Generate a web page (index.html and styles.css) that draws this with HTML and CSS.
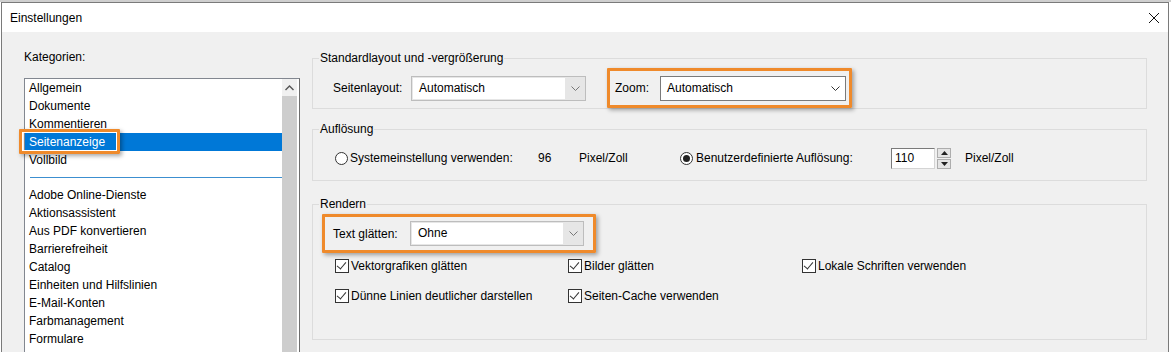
FILE: index.html
```html
<!DOCTYPE html>
<html lang="de">
<head>
  <meta charset="UTF-8" />
  <title>Einstellungen</title>
  <link rel="stylesheet" href="styles.css">
</head>
<body>

<div class="backdrop"></div>

<div class="dialog">
  <div class="titlebar">
    <span class="title">Einstellungen</span>
    <svg class="close" width="12" height="12" viewBox="0 0 12 12">
      <path d="M1 1 L11 11 M11 1 L1 11" stroke="#111" stroke-width="1" fill="none" />
    </svg>
  </div>

  <div class="dialog-body">
    <div class="categories">
      <div class="cat-label">Kategorien:</div>
      <div class="listbox">
        <ul class="list">
          <li>Allgemein</li>
          <li>Dokumente</li>
          <li>Kommentieren</li>
          <li class="selected">Seitenanzeige<span class="mark mark-item"></span></li>
          <li>Vollbild</li>
          <li class="sep"></li>
          <li>Adobe Online-Dienste</li>
          <li>Aktionsassistent</li>
          <li>Aus PDF konvertieren</li>
          <li>Barrierefreiheit</li>
          <li>Catalog</li>
          <li>Einheiten und Hilfslinien</li>
          <li>E-Mail-Konten</li>
          <li>Farbmanagement</li>
          <li>Formulare</li>
        </ul>
        <div class="scrollbar">
          <div class="scroll-up">
            <svg width="9" height="6" viewBox="0 0 9 6">
              <path d="M0.5 5 L4.5 1 L8.5 5" stroke="#555" stroke-width="1.4" fill="none" />
            </svg>
          </div>
          <div class="thumb"></div>
        </div>
      </div>
    </div>

    <div class="panel">
      <fieldset class="group g-layout">
        <legend>Standardlayout und -vergrößerung</legend>
        <div class="row-layout">
          <span class="lbl lbl-layout">Seitenlayout:</span>
          <div class="combo flat w-layout">
            <span class="combo-value">Automatisch</span>
            <span class="combo-arrow"><svg width="9" height="5" viewBox="0 0 9 5"><path d="M0.5 0.5 L4.5 4.5 L8.5 0.5" stroke="#777" fill="none" /></svg></span>
          </div>
          <div class="mark mark-zoom">
            <span class="lbl lbl-zoom">Zoom:</span>
            <div class="combo plain w-zoom">
              <span class="combo-value">Automatisch</span>
              <span class="combo-arrow"><svg width="9" height="5" viewBox="0 0 9 5"><path d="M0.5 0.5 L4.5 4.5 L8.5 0.5" stroke="#333" fill="none" /></svg></span>
            </div>
          </div>
        </div>
      </fieldset>

      <fieldset class="group g-res">
        <legend>Auflösung</legend>
        <div class="row-res">
          <span class="radio"></span>
          <span class="res-sys">Systemeinstellung verwenden:</span>
          <span class="res-num">96</span>
          <span class="res-unit">Pixel/Zoll</span>
          <span class="radio checked"></span>
          <span class="res-custom">Benutzerdefinierte Auflösung:</span>
          <span class="numbox">110</span>
          <span class="spinner">
            <span class="spin-btn"><svg width="7" height="4" viewBox="0 0 7 4"><path d="M0 4 L3.5 0 L7 4 Z" fill="#222" /></svg></span>
            <span class="spin-btn"><svg width="7" height="4" viewBox="0 0 7 4"><path d="M0 0 L3.5 4 L7 0 Z" fill="#222" /></svg></span>
          </span>
          <span class="res-unit2">Pixel/Zoll</span>
        </div>
      </fieldset>

      <fieldset class="group g-render">
        <legend>Rendern</legend>
        <div class="mark mark-text">
          <span class="lbl lbl-text">Text glätten:</span>
          <div class="combo flat w-text">
            <span class="combo-value">Ohne</span>
            <span class="combo-arrow"><svg width="9" height="5" viewBox="0 0 9 5"><path d="M0.5 0.5 L4.5 4.5 L8.5 0.5" stroke="#777" fill="none" /></svg></span>
          </div>
        </div>
        <div class="checks">
          <label class="check"><span class="box"></span>Vektorgrafiken glätten</label>
          <label class="check"><span class="box"></span>Bilder glätten</label>
          <label class="check"><span class="box"></span>Lokale Schriften verwenden</label>
          <label class="check"><span class="box"></span>Dünne Linien deutlicher darstellen</label>
          <label class="check"><span class="box"></span>Seiten-Cache verwenden</label>
        </div>
      </fieldset>
    </div>
  </div>
</div>

</body>
</html>
```

FILE: styles.css
```css
:root {
  --face: #f0f0f0;
  --group-line: #dcdcdc;
  --select-blue: #0078d7;
  --orange: #ef8a2b;
  --text: #000;
}
html, body {
  margin: 0;
  height: 352px;
  overflow: hidden;
}
body {
  font-family: "Liberation Sans", Arial, sans-serif;
  font-size: 12px;
  line-height: 16px;
  color: var(--text);
  background: #fff;
}
.backdrop {
  height: 2px;
  background: #cfcfcf;
}
.dialog {
  margin: 0 2px 0 1px;
  border: 1px solid #7a7a7a;
  border-bottom: none;
  height: 349px;
  overflow: hidden;
  background: var(--face);
}
.titlebar {
  height: 29px;
  background: #fff;
  display: flex;
  align-items: center;
  justify-content: space-between;
  padding: 0 8px 0 8px;
}
.close {
  margin-top: 1px;
}
.dialog-body {
  display: flex;
  gap: 12px;
  padding: 0 21px 0 22px;
}

/* left column */
.categories {
  width: 276px;
  flex: none;
}
.cat-label {
  padding-top: 17px;
  margin-bottom: 13px;
}
.listbox {
  display: flex;
  height: 300px;
  border: 1px solid #828790;
  border-right-color: #6d6d6d;
  background: #fff;
}
.list {
  list-style: none;
  margin: 0;
  padding: 0;
  width: 257px;
}
.list li {
  height: 18px;
  line-height: 18px;
  padding-left: 4px;
  position: relative;
}
.list li.selected {
  background: var(--select-blue);
  color: #fff;
}
.list li.sep {
  height: 17px;
  padding: 0;
  margin-left: 5px;
  background: linear-gradient(#fff 8px, #3c8fd0 8px, #3c8fd0 9px, #fff 9px);
}
.scrollbar {
  width: 15px;
  display: flex;
  flex-direction: column;
  margin-right: 2px;
}
.scroll-up {
  height: 17px;
  background: var(--face);
  display: flex;
  align-items: center;
  justify-content: center;
}
.thumb {
  flex: 1;
  background: #cdcdcd;
}

/* orange highlight marks */
.mark {
  border: 3px solid var(--orange);
  border-radius: 1px;
  box-shadow: 2px 2px 4px rgba(0, 0, 0, 0.35);
}
.mark-item {
  position: absolute;
  left: -6px;
  top: -4px;
  width: 95px;
  height: 19px;
  box-shadow: 2px 2px 4px rgba(0, 0, 0, 0.35), inset 0 0 0 1px #fff;
}

/* right panel */
.panel {
  flex: 1;
  padding-top: 18px;
}
.group {
  margin: 0;
  padding: 0;
  border: 1px solid var(--group-line);
  min-width: 0;
}
.group legend {
  margin-left: 6px;
  padding: 0 1px;
  line-height: 16px;
}
.g-res {
  margin-top: 12px;
}
.g-render {
  margin-top: 15px;
  height: 142px;
}

.row-layout {
  display: flex;
  align-items: center;
  height: 40px;
  padding-left: 20px;
  margin-top: 2px;
}
.lbl-layout {
  width: 78px;
}
.combo {
  display: flex;
  align-items: stretch;
  height: 25px;
  box-sizing: border-box;
}
.combo.flat {
  border: 1px solid #bdbdbd;
  background: #e6e6e6;
  padding: 1px 0 1px 1px;
}
.combo.plain {
  border: 1px solid #7a7a7a;
  background: #fff;
}
.combo-value {
  flex: 1;
  background: #fff;
  padding-left: 6px;
  line-height: 21px;
}
.combo.plain .combo-value {
  line-height: 23px;
}
.combo-arrow {
  width: 20px;
  display: flex;
  align-items: center;
  justify-content: center;
}
.w-layout { width: 175px; }
.w-zoom { width: 186px; }
.w-text { width: 174px; }

.mark-zoom {
  display: flex;
  align-items: center;
  margin-left: 21px;
  height: 34px;
  padding: 0 3px 0 5px;
}
.lbl-zoom {
  width: 45px;
}

.row-res {
  display: flex;
  align-items: center;
  height: 42px;
  padding-left: 22px;
  margin-bottom: 1px;
}
.radio {
  width: 11px;
  height: 11px;
  border: 1px solid #333;
  border-radius: 50%;
  background: #fff;
  flex: none;
  position: relative;
}
.radio.checked::after {
  content: "";
  position: absolute;
  left: 2px;
  top: 2px;
  width: 7px;
  height: 7px;
  border-radius: 50%;
  background: #222;
}
.res-sys { width: 188px; margin-left: 2px; }
.res-num { width: 41px; }
.res-unit { width: 101px; }
.res-custom { width: 195px; margin-left: 3px; }
.numbox {
  width: 44px;
  height: 21px;
  box-sizing: border-box;
  border: 1px solid #7a7a7a;
  border-right-color: #d4d4d4;
  border-bottom-color: #d4d4d4;
  background: #fff;
  padding-left: 3px;
  line-height: 19px;
}
.spinner {
  margin-left: 2px;
  width: 14px;
  height: 21px;
  display: flex;
  flex-direction: column;
  gap: 1px;
}
.spin-btn {
  flex: 1;
  border: 1px solid #adadad;
  background: #e5e5e5;
  display: flex;
  align-items: center;
  justify-content: center;
}
.res-unit2 { margin-left: 14px; }

.mark-text {
  display: flex;
  align-items: center;
  width: fit-content;
  margin: 2px 0 0 9px;
  height: 33px;
  padding: 0 9px 0 8px;
}
.lbl-text {
  width: 77px;
}
.checks {
  display: grid;
  grid-template-columns: 233px 234px auto;
  row-gap: 10px;
  padding: 3px 0 0 22px;
}
.check {
  display: flex;
  align-items: center;
  height: 20px;
}
.box {
  width: 12px;
  height: 12px;
  border: 1px solid #333;
  background: #fff;
  margin-right: 2px;
  position: relative;
}
.box::after {
  content: "";
  position: absolute;
  left: 3px;
  top: 0px;
  width: 4px;
  height: 8px;
  border: solid #333;
  border-width: 0 1.2px 1.2px 0;
  transform: rotate(40deg);
}
```
